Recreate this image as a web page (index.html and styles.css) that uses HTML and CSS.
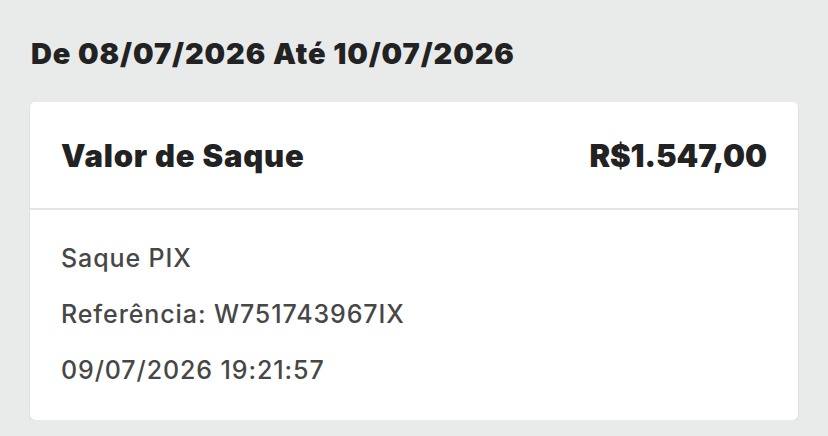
FILE: index.html
```html
<!DOCTYPE html>
<html lang="pt-BR">
<head>
<meta charset="utf-8">
<title>Extrato</title>
<link rel="stylesheet" href="styles.css">
</head>
<body>
<main class="page">
  <h1 class="period">De 08/07/2026 Até 10/07/2026</h1>
  <section class="card">
    <header class="card-head">
      <h2 class="card-title">Valor de Saque</h2>
      <span class="card-amount">R$1.547,00</span>
    </header>
    <div class="card-body">
      <p class="line">Saque PIX</p>
      <p class="line">Referência: W751743967IX</p>
      <p class="line">09/07/2026 19:21:57</p>
    </div>
  </section>
</main>
</body>
</html>
```

FILE: styles.css
```css
html, body {
  margin: 0;
  padding: 0;
}

body {
  background: #e9eaea;
  font-family: Inter, "Noto Sans", sans-serif;
  color: #222222;
}

.page {
  padding: 32px 30px 0 30px;
  display: flex;
  flex-direction: column;
}

.period {
  margin: 0 0 0 1px;
  font-size: 29px;
  font-weight: 900;
  line-height: 44px;
  letter-spacing: 0.9px;
}

.card {
  margin-top: 26px;
  background: #ffffff;
  border-radius: 5px;
  box-shadow: 0 1px 2px rgba(0, 0, 0, 0.12);
}

.card-head {
  display: flex;
  justify-content: space-between;
  align-items: center;
  height: 106px;
  padding: 0 31px;
  border-bottom: 2px solid #e3e4e4;
}

.card-title,
.card-amount {
  margin: 0;
  font-size: 31px;
  font-weight: 900;
}

.card-title {
  letter-spacing: 0.8px;
}

.card-amount {
  letter-spacing: -0.1px;
}

.card-body {
  padding: 20px 31px 22px;
  display: flex;
  flex-direction: column;
}

.line {
  margin: 0;
  font-size: 25px;
  font-weight: 450;
  line-height: 56px;
  letter-spacing: 0.9px;
  color: #474747;
}
```
